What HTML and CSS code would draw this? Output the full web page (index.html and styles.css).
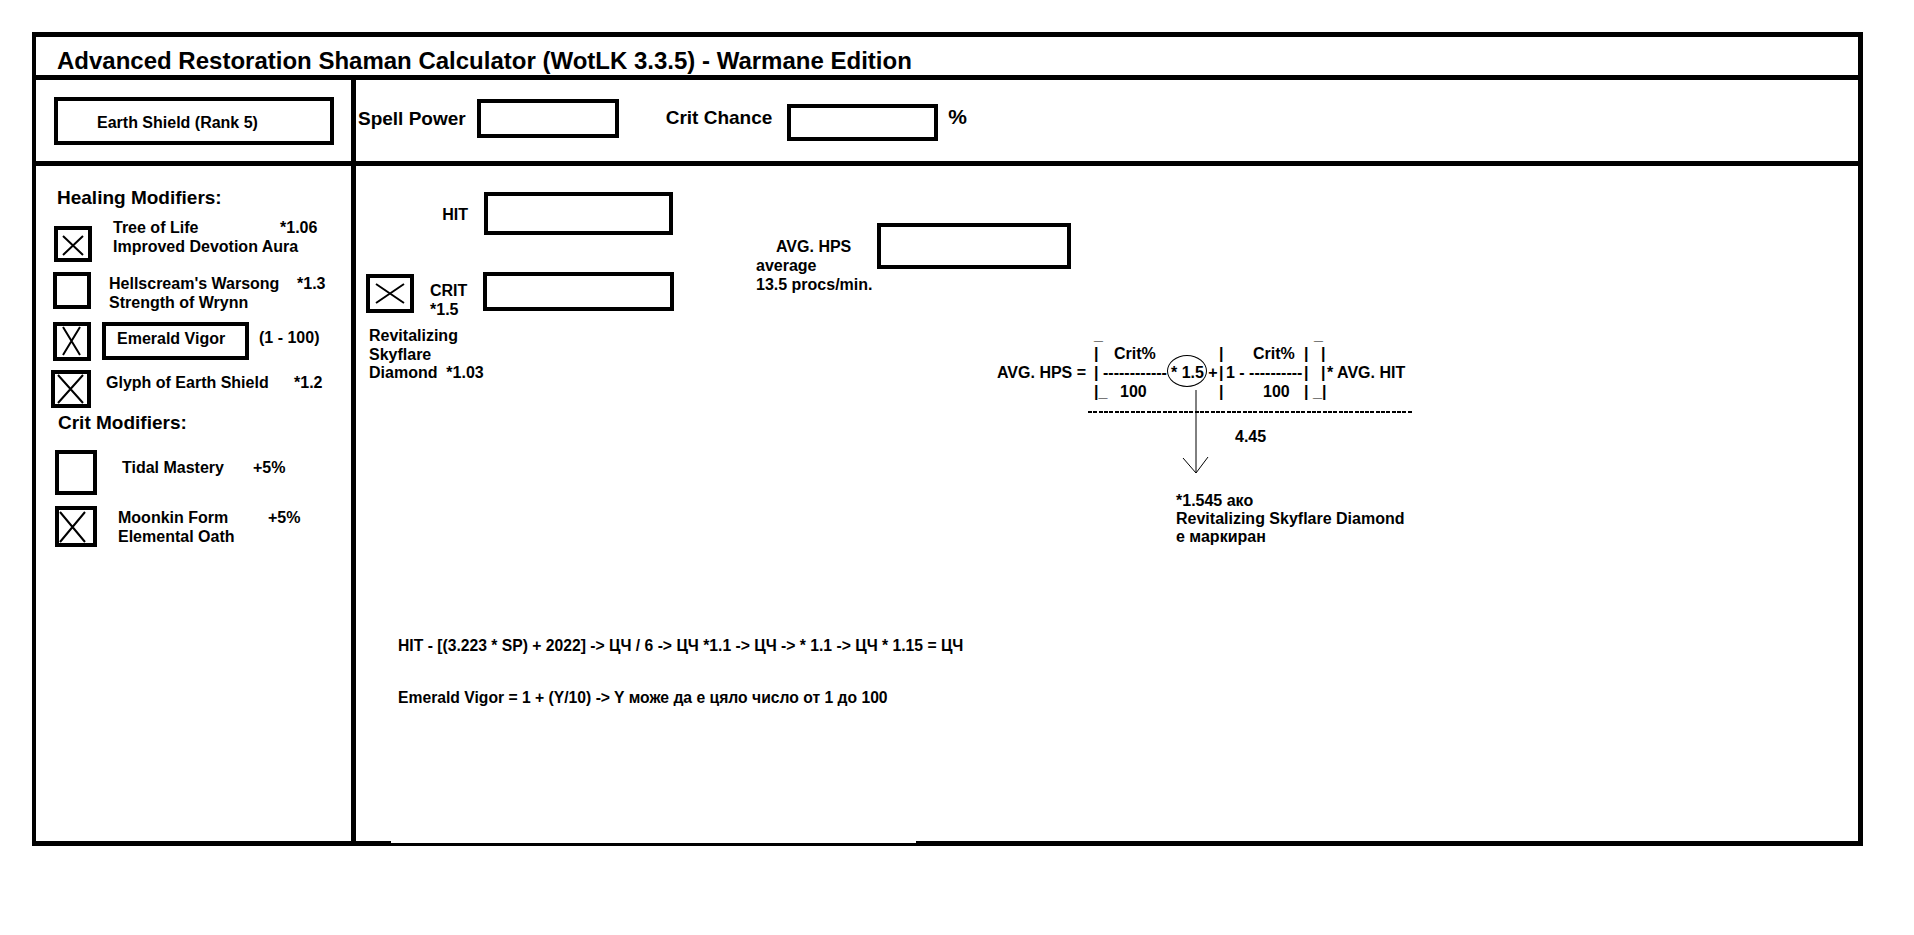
FILE: index.html
```html
<!DOCTYPE html>
<html lang="bg">
<head>
    <meta charset="UTF-8">
    <meta name="viewport" content="width=device-width, initial-scale=1.0">
    <title>Advanced Restoration Shaman Calculator</title>
    <link rel="stylesheet" href="styles.css">
</head>
<body>
    <div class="frame">
        <h1 class="title">Advanced Restoration Shaman Calculator (WotLK 3.3.5) - Warmane Edition</h1>

        <div class="toprow">
            <div class="cell-left">
                <div class="spell-box">Earth Shield (Rank 5)</div>
            </div>
            <div class="stats">
                <label class="stat-label sp-label" for="sp">Spell Power</label>
                <input type="text" id="sp" class="field sp-field">
                <label class="stat-label cc-label" for="cc">Crit Chance</label>
                <input type="text" id="cc" class="field cc-field">
                <span class="pct">%</span>
            </div>
        </div>

        <div class="main">
            <aside class="mods">
                <p class="mods-title">Healing Modifiers:</p>

                <div class="mod mod-1">
                    <span class="check">
                        <svg width="30" height="28"><path d="M5 6 L25 25 M25 6 L5 25"/></svg>
                    </span>
                    <div class="mod-text">
                        <div class="mod-line"><span class="mod-name">Tree of Life</span><span>*1.06</span></div>
                        <div>Improved Devotion Aura</div>
                    </div>
                </div>

                <div class="mod mod-2">
                    <span class="check"></span>
                    <div class="mod-text">
                        <div class="mod-line"><span class="mod-name">Hellscream's Warsong</span><span>*1.3</span></div>
                        <div>Strength of Wrynn</div>
                    </div>
                </div>

                <div class="mod mod-3">
                    <span class="check">
                        <svg width="30" height="31"><path d="M6 1 L23 29 M23 1 L6 29"/></svg>
                    </span>
                    <div class="vigor-box">Emerald Vigor</div>
                    <span class="vigor-range">(1 - 100)</span>
                </div>

                <div class="mod mod-4">
                    <span class="check">
                        <svg width="32" height="30"><path d="M3 1 L28 29 M28 1 L3 29"/></svg>
                    </span>
                    <div class="mod-text">
                        <div class="mod-line"><span class="mod-name">Glyph of Earth Shield</span><span>*1.2</span></div>
                    </div>
                </div>

                <p class="mods-title crit-title">Crit Modifiers:</p>

                <div class="mod mod-5">
                    <span class="check"></span>
                    <div class="mod-text">
                        <div class="mod-line"><span class="mod-name">Tidal Mastery</span><span>+5%</span></div>
                    </div>
                </div>

                <div class="mod mod-6">
                    <span class="check">
                        <svg width="34" height="33"><path d="M1 2 L26 32 M26 2 L1 32"/></svg>
                    </span>
                    <div class="mod-text">
                        <div class="mod-line"><span class="mod-name">Moonkin Form</span><span>+5%</span></div>
                        <div>Elemental Oath</div>
                    </div>
                </div>
            </aside>

            <section class="work">
                <div class="work-top">
                    <div class="inputs">
                        <div class="hit-row">
                            <label class="in-label" for="hit">HIT</label>
                            <input type="text" id="hit" class="field hit-field">
                        </div>
                        <div class="crit-row">
                            <span class="check check-crit">
                                <svg width="40" height="31"><path d="M6 6 L34 25 M34 6 L6 25"/></svg>
                            </span>
                            <label class="crit-label" for="crit">CRIT<br>*1.5</label>
                            <input type="text" id="crit" class="field crit-field">
                        </div>
                        <p class="gem">Revitalizing<br>Skyflare<br>Diamond&nbsp;&nbsp;*1.03</p>
                    </div>

                    <div class="results">
                        <div class="hps-row">
                            <div class="hps-label">
                                <div class="hps-first">AVG. HPS</div>
                                <div>average</div>
                                <div>13.5 procs/min.</div>
                            </div>
                            <input type="text" class="field hps-field">
                        </div>

                        <div class="formula">
                            <div class="formula-grid">
                                <span></span><span>_</span><span></span><span></span><span></span><span></span><span></span><span class="pad-3">_</span><span></span>
                                <span></span><span>|</span><span class="pad-13">Crit%</span><span></span><span>|</span><span class="pad-27">Crit%</span><span>|</span><span class="pad-10">|</span><span></span>
                                <span>AVG. HPS =</span><span>|</span><span class="pad-2">------------</span><span class="pad-1">* 1.5 +</span><span>|</span><span>1 - ----------</span><span>|</span><span class="pad-10">|</span><span class="pad-1">* AVG. HIT</span>
                                <span></span><span>|_</span><span class="pad-19">100</span><span></span><span>|</span><span class="pad-37">100</span><span>|</span><span class="pad-2">_|</span><span></span>
                            </div>
                            <div class="rule"></div>
                            <div class="result">4.45</div>
                            <p class="note">*1.545 ако<br>Revitalizing Skyflare Diamond<br>е маркиран</p>

                            <span class="ellipse"></span>
                            <svg class="arrow" width="28" height="85"><path d="M14 0 L14 83 M1 68 L14 83 M26 67 L14 83"/></svg>
                        </div>
                    </div>
                </div>

                <div class="notes">
                    <p>HIT - [(3.223 * SP) + 2022] -&gt; ЦЧ / 6 -&gt; ЦЧ *1.1 -&gt; ЦЧ -&gt; * 1.1 -&gt; ЦЧ * 1.15 = ЦЧ</p>
                    <p class="notes-2">Emerald Vigor = 1 + (Y/10) -&gt; Y може да е цяло число от 1 до 100</p>
                </div>
            </section>
        </div>
    </div>
</body>
</html>
```

FILE: styles.css
```css
* {
    box-sizing: border-box;
}
html, body {
    margin: 0;
    background: #fff;
}
body {
    font-family: "Liberation Sans", Arial, sans-serif;
    font-weight: 700;
    font-size: 16px;
    line-height: 19px;
    color: #000;
}
p {
    margin: 0;
}

/* outer sheet */
.frame {
    position: relative;
    display: flex;
    flex-direction: column;
    width: 1831px;
    height: 814px;
    margin: 32px 0 0 32px;
    border: 5px solid #000;
    border-left-width: 4px;
}
.frame::after {
    content: "";
    position: absolute;
    left: 355px;
    bottom: -2px;
    width: 525px;
    height: 2px;
    background: #fff;
}
.title {
    margin: 0;
    height: 43px;
    padding: 9px 0 0 21px;
    border-bottom: 5px solid #000;
    font-size: 24px;
    line-height: 30px;
}

/* top row */
.toprow {
    display: flex;
    height: 86px;
    border-bottom: 5px solid #000;
}
.cell-left {
    width: 320px;
    padding: 17px 0 0 18px;
    border-right: 5px solid #000;
}
.spell-box {
    width: 280px;
    height: 48px;
    padding: 12px 0 0 39px;
    border: 4px solid #000;
}
.stats {
    display: flex;
    align-items: flex-start;
    padding-left: 2px;
}
.stat-label {
    font-size: 19px;
    line-height: 22px;
}
.field {
    display: block;
    padding: 0;
    border: 4px solid #000;
    border-radius: 0;
    background: #fff;
    outline: 0;
}
.sp-label {
    margin-top: 28px;
}
.sp-field {
    width: 142px;
    height: 39px;
    margin: 19px 0 0 11px;
}
.cc-label {
    margin: 27px 0 0 47px;
}
.cc-field {
    width: 151px;
    height: 37px;
    margin: 24px 0 0 15px;
}
.pct {
    margin: 25px 0 0 10px;
    font-size: 21px;
    line-height: 24px;
}

/* main area */
.main {
    flex: 1;
    display: flex;
}
.mods {
    width: 320px;
    border-right: 5px solid #000;
}
.mods-title {
    margin: 21px 0 0 21px;
    font-size: 19px;
    line-height: 22px;
}
.crit-title {
    margin: 4px 0 0 22px;
}
.mod {
    display: flex;
    align-items: flex-start;
}
.check {
    display: block;
    flex: none;
    border: 4px solid #000;
    background: #fff;
}
.check svg,
.arrow {
    display: block;
    fill: none;
    stroke: #000;
    stroke-width: 2;
}
.mod-line {
    display: flex;
}
.mod-name {
    flex: none;
}

.mod-1 { margin-top: 9px; }
.mod-1 .check { width: 38px; height: 36px; margin: 8px 0 0 18px; }
.mod-1 .mod-text { margin-left: 21px; }
.mod-1 .mod-name { width: 167px; }

.mod-2 { margin-top: 10px; }
.mod-2 .check { width: 38px; height: 37px; margin-left: 17px; }
.mod-2 .mod-text { margin: 2px 0 0 18px; }
.mod-2 .mod-name { width: 188px; }

.mod-3 { margin-top: 10px; }
.mod-3 .check { width: 38px; height: 39px; margin-left: 17px; }
.vigor-box {
    width: 147px;
    height: 38px;
    margin-left: 11px;
    padding: 3px 0 0 11px;
    border: 4px solid #000;
}
.vigor-range {
    margin: 6px 0 0 10px;
}

.mod-4 { margin-top: 9px; }
.mod-4 .check { width: 40px; height: 38px; margin-left: 15px; }
.mod-4 .mod-text { margin: 3px 0 0 15px; }
.mod-4 .mod-name { width: 188px; }

.mod-5 { margin-top: 16px; }
.mod-5 .check { width: 42px; height: 45px; margin-left: 19px; }
.mod-5 .mod-text { margin: 8px 0 0 25px; }
.mod-5 .mod-name { width: 131px; }

.mod-6 { margin-top: 11px; }
.mod-6 .check { width: 42px; height: 41px; margin-left: 19px; }
.mod-6 .mod-text { margin: 2px 0 0 21px; }
.mod-6 .mod-name { width: 150px; }

/* working area */
.work {
    flex: 1;
    padding-top: 26px;
}
.work-top {
    display: flex;
    align-items: flex-start;
}
.inputs {
    margin-left: 10px;
}
.hit-row,
.crit-row {
    display: flex;
    align-items: flex-start;
}
.in-label {
    width: 102px;
    margin-top: 13px;
    text-align: right;
}
.hit-field {
    width: 189px;
    height: 43px;
    margin-left: 16px;
}
.crit-row {
    margin-top: 37px;
}
.check-crit {
    width: 48px;
    height: 39px;
    margin-top: 2px;
}
.crit-label {
    width: 53px;
    margin: 9px 0 0 16px;
}
.crit-field {
    width: 191px;
    height: 39px;
}
.gem {
    margin: 8px 0 0 3px;
    line-height: 18.5px;
}

.results {
    margin: 31px 0 0 82px;
}
.hps-row {
    display: flex;
    align-items: flex-start;
}
.hps-label {
    width: 121px;
    margin-top: 14px;
}
.hps-first {
    padding-left: 20px;
}
.hps-field {
    width: 194px;
    height: 46px;
}

/* the hand written formula */
.formula {
    position: relative;
    margin: 31px 0 0 241px;
}
.formula-grid {
    display: grid;
    grid-template-columns: 97px 7px 69px 49px 7px 78px 7px 15px auto;
    grid-auto-rows: 19px;
    white-space: pre;
}
.pad-1 { padding-left: 1px; }
.pad-2 { padding-left: 2px; }
.pad-3 { padding-left: 3px; }
.pad-10 { padding-left: 10px; }
.pad-13 { padding-left: 13px; }
.pad-19 { padding-left: 19px; }
.pad-27 { padding-left: 27px; }
.pad-37 { padding-left: 37px; }
.rule {
    width: 325px;
    height: 2px;
    margin: 10px 0 0 91px;
    background: repeating-linear-gradient(90deg, #000 0 4px, transparent 4px 5.33px);
}
.result {
    margin: 14px 0 0 238px;
}
.note {
    margin: 46px 0 0 179px;
    line-height: 18px;
}
.ellipse {
    position: absolute;
    left: 170px;
    top: 30px;
    width: 40px;
    height: 32px;
    border: 1px solid #000;
    border-radius: 50%;
}
.arrow {
    position: absolute;
    left: 185px;
    top: 65px;
    stroke-width: 1;
}

.notes {
    margin: 90px 0 0 42px;
    font-size: 15.7px;
}
.notes-2 {
    margin-top: 33px;
}
```
